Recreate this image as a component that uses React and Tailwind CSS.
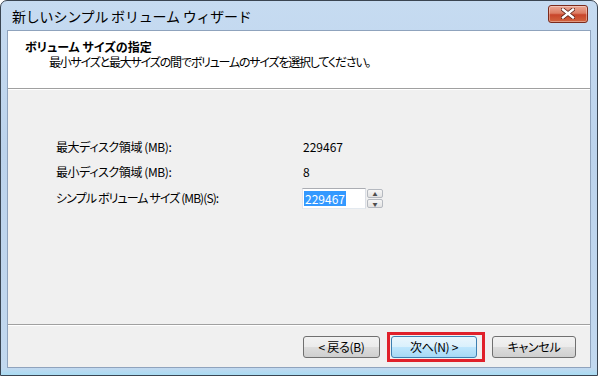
import React from "react";

const font = { fontFamily: '"Noto Sans CJK JP", "Noto Sans", sans-serif' };

function WinButton({ children, primary, width }) {
  return (
    <div
      className={[
        "flex h-[22px] shrink-0 items-center justify-center rounded-[3px] border text-[12px] leading-none tracking-[-0.3px] text-black",
        width,
        primary
          ? "border-[#3c7fb1] bg-[linear-gradient(#eaf6fd_0%,#d9f0fc_50%,#bee6fd_50%,#a7d9f5_100%)]"
          : "border-[#707070] bg-[linear-gradient(#f2f2f2_0%,#ebebeb_50%,#dddddd_50%,#cfcfcf_100%)]",
      ].join(" ")}
    >
      {children}
    </div>
  );
}

function Spinner() {
  return (
    <div className="ml-[1px] flex flex-col gap-[1px]">
      {["▲", "▼"].map((g) => (
        <div
          key={g}
          className="flex h-[9px] w-[16px] items-center justify-center rounded-[2px] border border-[#b5b9c0] bg-[linear-gradient(#f6f6f6,#e2e2e2)] text-[5px] leading-none text-[#4d4d4d]"
        >
          {g}
        </div>
      ))}
    </div>
  );
}

export default function App() {
  return (
    <div className="h-[376px] w-[598px] overflow-hidden bg-white" style={font}>
      <div className="flex h-full w-full flex-col rounded-t-[7px] border border-[#3a4552] bg-[linear-gradient(#c6dbf1,#bcd3ec_40%,#c2d8ef)]">
        {/* title bar */}
        <div className="flex h-[29px] shrink-0 items-center justify-between pl-[11px] pr-[9px]">
          <span className="mt-[1px] text-[14px] tracking-[-0.2px] text-black">新しいシンプル ボリューム ウィザード</span>
          <div className="mt-[-4px] flex h-[18px] w-[40px] items-center justify-center rounded-[3px] border border-[#7b2a1c] bg-[linear-gradient(#eba794_0%,#dd7d64_45%,#c8452b_55%,#d2643e_100%)] shadow-[inset_0_0_0_1px_rgba(255,255,255,0.35)]">
            <svg width="14" height="11" viewBox="0 0 14 11">
              <path d="M2 1.5 L12 9.5 M12 1.5 L2 9.5" stroke="#5a2016" strokeWidth="4" strokeLinecap="square" />
              <path d="M2 1.5 L12 9.5 M12 1.5 L2 9.5" stroke="#ffffff" strokeWidth="2.4" strokeLinecap="square" />
            </svg>
          </div>
        </div>

        {/* client area */}
        <div className="mx-[6px] flex flex-1 flex-col border border-[#8fa3bd] bg-[#f0f0f0] [font-feature-settings:'palt']">
          <div className="h-[57px] shrink-0 bg-white pl-[17px] pt-[8px]">
            <div className="text-[12px] font-bold leading-[15px] text-black">ボリューム サイズの指定</div>
            <div className="pl-[24px] text-[12px] leading-[15px] tracking-[-1.2px] text-black">
              最小サイズと最大サイズの間でボリュームのサイズを選択してください。
            </div>
          </div>
          <div className="h-[1px] shrink-0 bg-[#a0a0a0]" />
          <div className="h-[1px] shrink-0 bg-white" />

          <div className="flex flex-1 flex-col pl-[48px] pt-[44px] text-[12px] text-black">
            <div className="flex h-[25px] items-center">
              <span className="w-[247px] tracking-[-0.4px]">最大ディスク領域 (MB):</span>
              <span>229467</span>
            </div>
            <div className="flex h-[25px] items-center">
              <span className="w-[247px] tracking-[-0.4px]">最小ディスク領域 (MB):</span>
              <span>8</span>
            </div>
            <div className="mt-[3px] flex h-[22px] items-center">
              <span className="w-[246px] tracking-[-0.9px]">シンプル ボリューム サイズ (MB)(S):</span>
              <div className="flex items-center">
                <div className="flex h-[21px] w-[64px] items-center border border-[#abadb3] border-l-[#e2e3ea] border-b-[#e3e9ef] border-r-[#dbdfe6] bg-white pl-[1px]">
                  <span className="bg-[#3399ff] px-[1px] leading-[15px] text-white">229467</span>
                </div>
                <Spinner />
              </div>
            </div>
          </div>

          <div className="h-[1px] shrink-0 bg-[#a0a0a0]" />
          <div className="h-[1px] shrink-0 bg-white" />
          <div className="flex h-[41px] shrink-0 items-center justify-end pr-[14px]">
            <WinButton width="w-[77px]">&lt; 戻る(B)</WinButton>
            <div className="mx-[7px] shrink-0 border-[3px] border-[#e0202a] py-[1px] pl-[1px] pr-[5px]">
              <WinButton primary width="w-[86px]">次へ(N) &gt;</WinButton>
            </div>
            <WinButton width="w-[84px]">キャンセル</WinButton>
          </div>
        </div>
        <div className="h-[7px] shrink-0 bg-[linear-gradient(#c2d8ef,#a9dcf3)]" />
      </div>
    </div>
  );
}
